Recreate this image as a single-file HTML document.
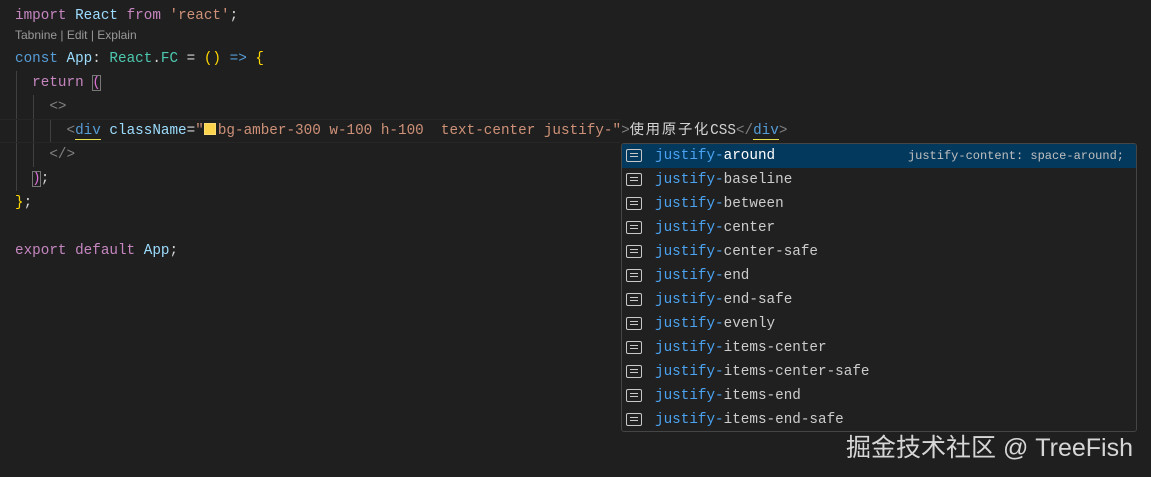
<!DOCTYPE html>
<html><head><meta charset="utf-8"><style>
body{margin:0;width:1151px;height:477px;background:#1f1f1f;overflow:hidden;position:relative;font-family:"Liberation Mono",monospace;font-size:14.3px;color:#d4d4d4}
.l{position:absolute;left:15px;height:24px;line-height:24px;white-space:pre}
.k{color:#c586c0}.b{color:#569cd6}.v{color:#9cdcfe}.t{color:#4ec9b0}.s{color:#ce9178}.g{color:#808080}.y{color:#ffd700}.p{color:#da70d6}.w{color:#d4d4d4}
.cj{font-family:"Liberation Mono","Noto Sans CJK SC",monospace}
.zh{letter-spacing:1.8px}
.guide{position:absolute;width:1px;background:#404040}
.pop{position:absolute;left:621px;top:143px;width:514px;height:287px;background:#202020;border:1px solid #454545;border-radius:3px;overflow:hidden}
.row{position:relative;height:24px;line-height:24px;white-space:pre;color:#cccccc}
.row.sel{background:#04395e;color:#fff}
.row .m{color:#4aa2f0}
.ic{position:absolute;left:4px;top:5px;width:14px;height:11px;border:1.4px solid #c8c8c8;border-radius:2px}
.ic::before{content:"";position:absolute;left:3px;right:3px;top:3px;height:1.4px;background:#c8c8c8;box-shadow:0 3px 0 #c8c8c8}
.row .tx{position:absolute;left:33px}
.det{position:absolute;right:12px;font-size:12px;color:#c0c0c0}
</style></head><body>
<div class="guide" style="left:16px;top:71px;height:120px"></div>
<div class="guide" style="left:33px;top:95px;height:72px"></div>
<div class="guide" style="left:50px;top:119px;height:24px"></div>
<div style="position:absolute;left:0;top:119px;width:620px;height:22px;border-top:1px solid #262626;border-bottom:1px solid #262626"></div>
<div class="l" style="top:4px"><span class="k">import</span> <span class="v">React</span> <span class="k">from</span> <span class="s">'react'</span>;</div>
<div style="position:absolute;left:15px;top:28px;font-family:'Liberation Sans',sans-serif;font-size:12px;color:#999">Tabnine | Edit | Explain</div>
<div class="l" style="top:47px"><span class="b">const</span> <span class="v">App</span>: <span class="t">React</span>.<span class="t">FC</span> = <span class="y">()</span> <span class="b">=&gt;</span> <span class="y">{</span></div>
<div class="l" style="top:71px">  <span class="k">return</span> <span class="p" style="outline:1px solid #777;outline-offset:-1px">(</span></div>
<div class="l" style="top:95px">    <span class="g">&lt;&gt;</span></div>
<div class="l cj" style="top:119px">      <span class="g">&lt;</span><span class="b" style="border-bottom:1px solid #e8e04a">div</span> <span class="v">className</span>=<span class="s">"<span style="display:inline-block;width:10px;height:10px;background:#fcd34d;border:1px solid #fff3;vertical-align:-1px;margin-right:2px"></span>bg-amber-300 w-100 h-100  text-center justify-"</span><span class="g">&gt;</span><span class="zh">使用原子化</span>CSS<span class="g">&lt;/</span><span class="b" style="border-bottom:1px solid #e8e04a">div</span><span class="g">&gt;</span></div>
<div class="l" style="top:143px">    <span class="g">&lt;/&gt;</span></div>
<div class="l" style="top:167px">  <span class="p" style="outline:1px solid #777;outline-offset:-1px">)</span>;</div>
<div class="l" style="top:191px"><span class="y">}</span>;</div>
<div class="l" style="top:239px"><span class="k">export</span> <span class="k">default</span> <span class="v">App</span>;</div>
<div class="pop">
<div class="row sel"><span class="ic"></span><span class="tx"><span class="m">justify-</span>around</span><span class="det">justify-content: space-around;</span></div>
<div class="row"><span class="ic"></span><span class="tx"><span class="m">justify-</span>baseline</span></div>
<div class="row"><span class="ic"></span><span class="tx"><span class="m">justify-</span>between</span></div>
<div class="row"><span class="ic"></span><span class="tx"><span class="m">justify-</span>center</span></div>
<div class="row"><span class="ic"></span><span class="tx"><span class="m">justify-</span>center-safe</span></div>
<div class="row"><span class="ic"></span><span class="tx"><span class="m">justify-</span>end</span></div>
<div class="row"><span class="ic"></span><span class="tx"><span class="m">justify-</span>end-safe</span></div>
<div class="row"><span class="ic"></span><span class="tx"><span class="m">justify-</span>evenly</span></div>
<div class="row"><span class="ic"></span><span class="tx"><span class="m">justify-</span>items-center</span></div>
<div class="row"><span class="ic"></span><span class="tx"><span class="m">justify-</span>items-center-safe</span></div>
<div class="row"><span class="ic"></span><span class="tx"><span class="m">justify-</span>items-end</span></div>
<div class="row"><span class="ic"></span><span class="tx"><span class="m">justify-</span>items-end-safe</span></div>
</div>
<div style="position:absolute;left:846px;top:428px;font-family:'Liberation Sans','Noto Sans CJK SC',sans-serif;font-size:25px;color:#d6d6d6;white-space:nowrap">掘金技术社区 @ TreeFish</div>
</body></html>
